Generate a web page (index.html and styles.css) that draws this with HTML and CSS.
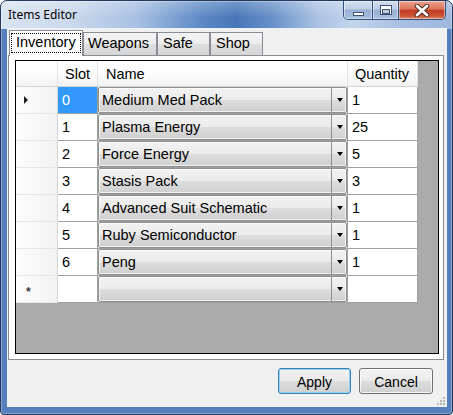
FILE: index.html
```html
<!DOCTYPE html>
<html>
<head>
<meta charset="utf-8">
<link rel="stylesheet" href="styles.css">
</head>
<body>
<div class="window">
  <div class="titlebar">
    <span class="title">Items Editor</span>
    <div class="caption">
      <div class="cbtn min"><span class="glyph-min"></span></div>
      <div class="cbtn max"><span class="glyph-max"></span></div>
      <div class="cbtn close">
        <svg width="16" height="13" viewBox="0 0 16 13">
          <path d="M3 2 L13 11 M13 2 L3 11" stroke="#4a2a24" stroke-width="4.6" stroke-linecap="round" fill="none"/>
          <path d="M3 2 L13 11 M13 2 L3 11" stroke="#ffffff" stroke-width="2.8" stroke-linecap="round" fill="none"/>
        </svg>
      </div>
    </div>
  </div>
  <div class="client">
    <div class="tabs">
      <div class="tab selected"><span class="focus">Inventory</span></div>
      <div class="tab tab-weapons">Weapons</div>
      <div class="tab tab-small">Safe</div>
      <div class="tab tab-small">Shop</div>
    </div>
    <div class="tabpage">
      <div class="grid">
        <div class="row header">
          <div class="cell rh"></div>
          <div class="cell slot">Slot</div>
          <div class="cell name">Name</div>
          <div class="cell qty">Quantity</div>
        </div>
        <div class="row">
          <div class="cell rh"><span class="current"></span></div>
          <div class="cell slot selected">0</div>
          <div class="cell name"><div class="combo"><span class="combo-text">Medium Med Pack</span><span class="combo-arrow"><span class="tri"></span></span></div></div>
          <div class="cell qty">1</div>
        </div>
        <div class="row">
          <div class="cell rh"></div>
          <div class="cell slot">1</div>
          <div class="cell name"><div class="combo"><span class="combo-text">Plasma Energy</span><span class="combo-arrow"><span class="tri"></span></span></div></div>
          <div class="cell qty">25</div>
        </div>
        <div class="row">
          <div class="cell rh"></div>
          <div class="cell slot">2</div>
          <div class="cell name"><div class="combo"><span class="combo-text">Force Energy</span><span class="combo-arrow"><span class="tri"></span></span></div></div>
          <div class="cell qty">5</div>
        </div>
        <div class="row">
          <div class="cell rh"></div>
          <div class="cell slot">3</div>
          <div class="cell name"><div class="combo"><span class="combo-text">Stasis Pack</span><span class="combo-arrow"><span class="tri"></span></span></div></div>
          <div class="cell qty">3</div>
        </div>
        <div class="row">
          <div class="cell rh"></div>
          <div class="cell slot">4</div>
          <div class="cell name"><div class="combo"><span class="combo-text">Advanced Suit Schematic</span><span class="combo-arrow"><span class="tri"></span></span></div></div>
          <div class="cell qty">1</div>
        </div>
        <div class="row">
          <div class="cell rh"></div>
          <div class="cell slot">5</div>
          <div class="cell name"><div class="combo"><span class="combo-text">Ruby Semiconductor</span><span class="combo-arrow"><span class="tri"></span></span></div></div>
          <div class="cell qty">1</div>
        </div>
        <div class="row">
          <div class="cell rh"></div>
          <div class="cell slot">6</div>
          <div class="cell name"><div class="combo"><span class="combo-text">Peng</span><span class="combo-arrow"><span class="tri"></span></span></div></div>
          <div class="cell qty">1</div>
        </div>
        <div class="row">
          <div class="cell rh"><span class="newrow">*</span></div>
          <div class="cell slot"></div>
          <div class="cell name"><div class="combo"><span class="combo-text"></span><span class="combo-arrow"><span class="tri"></span></span></div></div>
          <div class="cell qty"></div>
        </div>
      </div>
    </div>
    <div class="buttons">
      <button class="btn default">Apply</button>
      <button class="btn cancel">Cancel</button>
    </div>
    <svg class="grip" width="9" height="9" viewBox="0 0 9 9">
      <rect x="7" y="1" width="2" height="2" fill="#b8b8b8"/>
      <rect x="4" y="4" width="2" height="2" fill="#b8b8b8"/>
      <rect x="7" y="4" width="2" height="2" fill="#b8b8b8"/>
      <rect x="1" y="7" width="2" height="2" fill="#b8b8b8"/>
      <rect x="4" y="7" width="2" height="2" fill="#b8b8b8"/>
      <rect x="7" y="7" width="2" height="2" fill="#b8b8b8"/>
    </svg>
  </div>
</div>
</body>
</html>
```

FILE: styles.css
```css
* { box-sizing: border-box; }
html, body { margin: 0; padding: 0; }
body {
  width: 453px;
  height: 415px;
  overflow: hidden;
  background: #ffffff;
  font-family: "Liberation Sans", Arial, sans-serif;
}

.window {
  width: 453px;
  height: 415px;
  border: 1px solid #233a5c;
  border-radius: 7px 7px 4px 4px;
  padding: 0 5px 7px 6px;
  display: flex;
  flex-direction: column;
  background:
    linear-gradient(to bottom, rgba(255,255,255,0.25), rgba(255,255,255,0) 60%) top / 100% 28px no-repeat,
    linear-gradient(to right, #d9e4f2 0%, #cbd9ec 15%, #a7c0e2 30%, #5f8bc6 44%, #4676b8 52%, #6790c8 60%, #a9c1e2 70%, #c3d5ec 78%, #a9c1e1 88%, #9db8dc 100%) top / 100% 28px no-repeat,
    #5580bd;
  box-shadow: inset 0 0 0 1px rgba(255,255,255,0.3);
}

.titlebar {
  height: 27px;
  display: flex;
  justify-content: space-between;
  align-items: flex-start;
}
.title {
  font-family: "Noto Sans", "Open Sans", sans-serif;
  font-size: 12px;
  line-height: 15px;
  margin: 6px 0 0 1px;
  color: #000;
}

.caption {
  display: flex;
  height: 19px;
  margin-right: 1px;
  border: 1px solid #34507a;
  border-top: none;
  border-radius: 0 0 5px 5px;
  overflow: hidden;
}
.cbtn {
  height: 100%;
  display: flex;
  align-items: center;
  justify-content: center;
  box-shadow: inset 0 0 0 1px rgba(255,255,255,0.45);
}
.cbtn.min, .cbtn.max {
  background: linear-gradient(to bottom, #d3dfee 0%, #bccde5 45%, #97b0d3 50%, #a8c0e0 100%);
}
.cbtn.min { width: 28px; align-items: flex-end; padding-bottom: 3px; }
.cbtn.max { width: 26px; border-left: 1px solid #34507a; }
.cbtn.close {
  width: 47px;
  border-left: 1px solid #34507a;
  background: linear-gradient(to bottom, #eba593 0%, #dc735a 45%, #c23b22 52%, #cc5134 80%, #de8263 100%);
}
.glyph-min {
  width: 11px;
  height: 4px;
  background: #fff;
  border: 1px solid #3f5272;
}
.glyph-max {
  width: 12px;
  height: 10px;
  border: 1px solid #3f5272;
  background: #fff;
  display: flex;
  align-items: center;
  justify-content: center;
}
.glyph-max::after {
  content: "";
  width: 6px;
  height: 3px;
  margin-top: 2px;
  border: 1px solid #3f5272;
  background: #bccde5;
}

.client {
  flex: 1;
  position: relative;
  background: #f0f0f0;
  border: 1px solid #eef3f9;
  display: flex;
  flex-direction: column;
}

.tabs {
  height: 27px;
  margin-bottom: -1px;
  padding-left: 1px;
  display: flex;
  align-items: flex-start;
  position: relative;
  z-index: 1;
}
.tab {
  margin-top: 3px;
  height: 23px;
  border: 1px solid #898c95;
  border-bottom: none;
  background: linear-gradient(to bottom, #f4f4f4 0%, #ececec 48%, #dedede 52%, #d6d6d6 100%);
  font-size: 14.5px;
  line-height: 17px;
  padding: 2px 0 0 4px;
  color: #000;
  white-space: nowrap;
}
.tab.selected {
  margin-top: 1px;
  height: 26px;
  width: 74px;
  background: #ffffff;
  padding: 1px 0 0 0;
}
.tab-weapons { width: 74px; }
.tab-small { width: 53px; padding-left: 5px; }
.focus {
  display: inline-block;
  margin: 1px 0 0 1px;
  width: 70px;
  border: 1px dotted #000;
  padding: 0 0 1px 4px;
}

.tabpage {
  height: 305px;
  margin-right: 2px;
  border: 1px solid #898c95;
  background: #ffffff;
  padding: 4px 4px 5px 6px;
  display: flex;
}
.grid {
  flex: 1;
  border: 1px solid #000;
  background: #ababab;
  font-size: 14.5px;
  color: #000;
}
.row {
  display: flex;
  height: 27px;
}
.row.header { height: 26px; }
.cell {
  height: 100%;
  border-right: 1px solid #a0a0a0;
  border-bottom: 1px solid #a0a0a0;
  background: #ffffff;
  display: flex;
  align-items: center;
  padding-left: 4px;
  white-space: nowrap;
}
.rh { width: 42px; background: linear-gradient(to right, #fdfdfd, #f2f2f2); border-right-color: #d5d5d5; border-bottom-color: #e6e6e6; padding-left: 7px; }
.slot { width: 40px; }
.name { width: 250px; padding-left: 0; }
.qty { width: 70px; }

.header .cell {
  background: linear-gradient(to bottom, #ffffff 0%, #fbfbfb 60%, #f1f2f4 100%);
  border-right-color: #e3e3e3;
  border-bottom-color: #d5d5d5;
  padding-left: 7px;
  padding-top: 1px;
}
.header .name { padding-left: 8px; }

.slot.selected { background: #3399ff; color: #ffffff; }

.current {
  width: 0;
  height: 0;
  margin-left: 1px;
  border-top: 4px solid transparent;
  border-bottom: 4px solid transparent;
  border-left: 4px solid #1e1e1e;
}
.newrow {
  font-size: 12px;
  font-weight: bold;
  color: #3a3a3a;
  margin-left: 3px;
  margin-top: 5px;
}

.combo {
  width: 100%;
  height: 100%;
  border: 1px solid #8e8f8f;
  border-radius: 2px;
  background: linear-gradient(to bottom, #f2f2f2 0%, #ebebeb 48%, #dddddd 52%, #cfcfcf 100%);
  box-shadow: inset 0 0 0 1px rgba(255,255,255,0.7);
  display: flex;
  align-items: center;
}
.combo-text {
  flex: 1;
  padding-left: 3px;
  overflow: hidden;
}
.combo-arrow {
  width: 15px;
  height: 100%;
  border-left: 1px solid #8e8f8f;
  display: flex;
  align-items: center;
  justify-content: center;
}
.tri {
  width: 0;
  height: 0;
  border-left: 3.5px solid transparent;
  border-right: 3.5px solid transparent;
  border-top: 4px solid #000;
  margin-left: 1px;
}

.buttons {
  display: flex;
  justify-content: flex-end;
  gap: 8px;
  margin-top: 8px;
  padding-right: 13px;
}
.btn {
  height: 26px;
  border: 1px solid #707070;
  border-radius: 3px;
  background: linear-gradient(to bottom, #f2f2f2 0%, #ebebeb 48%, #dddddd 52%, #cfcfcf 100%);
  box-shadow: inset 0 0 0 1px rgba(255,255,255,0.8);
  font-family: "Liberation Sans", Arial, sans-serif;
  font-size: 14px;
  color: #000;
  padding: 2px 0 0 0;
  margin: 0;
}
.btn.default {
  width: 73px;
  border-color: #3c7fb1;
  box-shadow: inset 0 0 0 1px #8fd3f0;
}
.btn.cancel { width: 74px; }

.grip {
  position: absolute;
  right: 1px;
  bottom: 1px;
}
```
